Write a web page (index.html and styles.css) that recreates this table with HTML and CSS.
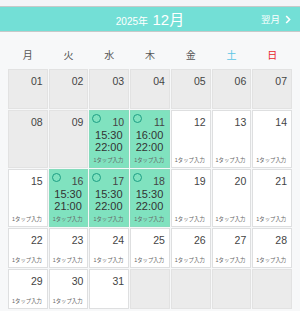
FILE: index.html
```html
<!DOCTYPE html>
<html lang="ja">
<head>
<meta charset="utf-8">
<link rel="stylesheet" href="styles.css">
</head>
<body>
<div class="topgap"></div>
<header class="header">
  <div></div>
  <div class="title"><span class="year">2025年</span> <span class="month">12月</span></div>
  <div class="next">翌月 <svg class="chev" width="6" height="9" viewBox="0 0 6 9"><path d="M1.2 1 L4.6 4.5 L1.2 8" fill="none" stroke="#fff" stroke-width="1.6"/></svg></div>
</header>
<div class="weekdays">
  <span>月</span><span>火</span><span>水</span><span>木</span><span>金</span><span class="sat">土</span><span class="sun">日</span>
</div>
<div class="grid">
  <div class="cell past"><span class="num">01</span></div>
  <div class="cell past"><span class="num">02</span></div>
  <div class="cell past"><span class="num">03</span></div>
  <div class="cell past"><span class="num">04</span></div>
  <div class="cell past"><span class="num">05</span></div>
  <div class="cell past"><span class="num">06</span></div>
  <div class="cell past"><span class="num">07</span></div>

  <div class="cell past"><span class="num">08</span></div>
  <div class="cell past"><span class="num">09</span></div>
  <div class="cell on"><span class="circle"></span><span class="num">10</span><div class="times">15:30<br>22:00</div><span class="tap">1タップ入力</span></div>
  <div class="cell on"><span class="circle"></span><span class="num">11</span><div class="times">16:00<br>22:00</div><span class="tap">1タップ入力</span></div>
  <div class="cell"><span class="num">12</span><span class="tap">1タップ入力</span></div>
  <div class="cell"><span class="num">13</span><span class="tap">1タップ入力</span></div>
  <div class="cell"><span class="num">14</span><span class="tap">1タップ入力</span></div>

  <div class="cell"><span class="num">15</span><span class="tap">1タップ入力</span></div>
  <div class="cell on"><span class="circle"></span><span class="num">16</span><div class="times">15:30<br>21:00</div><span class="tap">1タップ入力</span></div>
  <div class="cell on"><span class="circle"></span><span class="num">17</span><div class="times">15:30<br>22:00</div><span class="tap">1タップ入力</span></div>
  <div class="cell on"><span class="circle"></span><span class="num">18</span><div class="times">15:30<br>22:00</div><span class="tap">1タップ入力</span></div>
  <div class="cell"><span class="num">19</span><span class="tap">1タップ入力</span></div>
  <div class="cell"><span class="num">20</span><span class="tap">1タップ入力</span></div>
  <div class="cell"><span class="num">21</span><span class="tap">1タップ入力</span></div>

  <div class="cell"><span class="num">22</span><span class="tap">1タップ入力</span></div>
  <div class="cell"><span class="num">23</span><span class="tap">1タップ入力</span></div>
  <div class="cell"><span class="num">24</span><span class="tap">1タップ入力</span></div>
  <div class="cell"><span class="num">25</span><span class="tap">1タップ入力</span></div>
  <div class="cell"><span class="num">26</span><span class="tap">1タップ入力</span></div>
  <div class="cell"><span class="num">27</span><span class="tap">1タップ入力</span></div>
  <div class="cell"><span class="num">28</span><span class="tap">1タップ入力</span></div>

  <div class="cell"><span class="num">29</span><span class="tap">1タップ入力</span></div>
  <div class="cell"><span class="num">30</span><span class="tap">1タップ入力</span></div>
  <div class="cell"><span class="num">31</span></div>
  <div class="cell past"></div>
  <div class="cell past"></div>
  <div class="cell past"></div>
  <div class="cell past"></div>
</div>
</body>
</html>
```
FILE: styles.css
```css
html, body {
  margin: 0;
  padding: 0;
  background: #f7f8f9;
  font-family: "Liberation Sans", "Noto Sans CJK JP", sans-serif;
  color: #444;
  overflow: hidden;
}
.topgap {
  height: 6px;
  background: #f3f4f7;
}
.header {
  height: 24px;
  background: #73dfd6;
  border-top: 1px solid #c6c9c9;
  border-bottom: 1px solid #c6c9c9;
  display: grid;
  grid-template-columns: 1fr auto 1fr;
  align-items: center;
  color: #fff;
}
.title {
  white-space: nowrap;
  line-height: 1;
  padding-top: 1px;
}
.year {
  font-size: 10px;
}
.month {
  font-size: 15px;
}
.next {
  justify-self: end;
  display: flex;
  align-items: center;
  gap: 5px;
  font-size: 9.5px;
  padding-right: 9px;
}
.weekdays {
  margin: 0 8px;
  padding: 18px 0 7px;
  display: grid;
  grid-template-columns: repeat(7, minmax(0, 1fr));
  column-gap: 1px;
  text-align: center;
  font-size: 10px;
  line-height: 12px;
  color: #555;
}
.weekdays .sat { color: #5cc6e6; }
.weekdays .sun { color: #e8262b; }
.grid {
  width: 284px;
  margin: 0 8px;
  display: grid;
  grid-template-columns: repeat(7, minmax(0, 1fr));
  grid-template-rows: 40px 58px 58px 40px 40px;
  gap: 1px;
}
.cell {
  position: relative;
  box-sizing: border-box;
  min-width: 0;
  overflow: hidden;
  background: #fff;
  border: 1px solid #dedfe0;
  display: flex;
  flex-direction: column;
  padding: 5px 4px 3px 3px;
}
.cell.past {
  background: #ebebeb;
  border-color: #e2e2e2;
}
.cell.on {
  background: #80e2bf;
  border-color: #86dcbd;
}
.num {
  align-self: flex-end;
  font-size: 10.5px;
  line-height: 12px;
  color: #444;
}
.circle {
  position: absolute;
  left: 2px;
  top: 3px;
  width: 7px;
  height: 7px;
  border: 1.4px solid #1d9e84;
  border-radius: 50%;
}
.times {
  text-align: center;
  font-size: 11px;
  line-height: 12px;
  color: #333;
  margin-top: 1px;
}
.tap {
  margin-top: auto;
  font-size: 5.4px;
  line-height: 7px;
  color: #666;
  white-space: nowrap;
}
```
